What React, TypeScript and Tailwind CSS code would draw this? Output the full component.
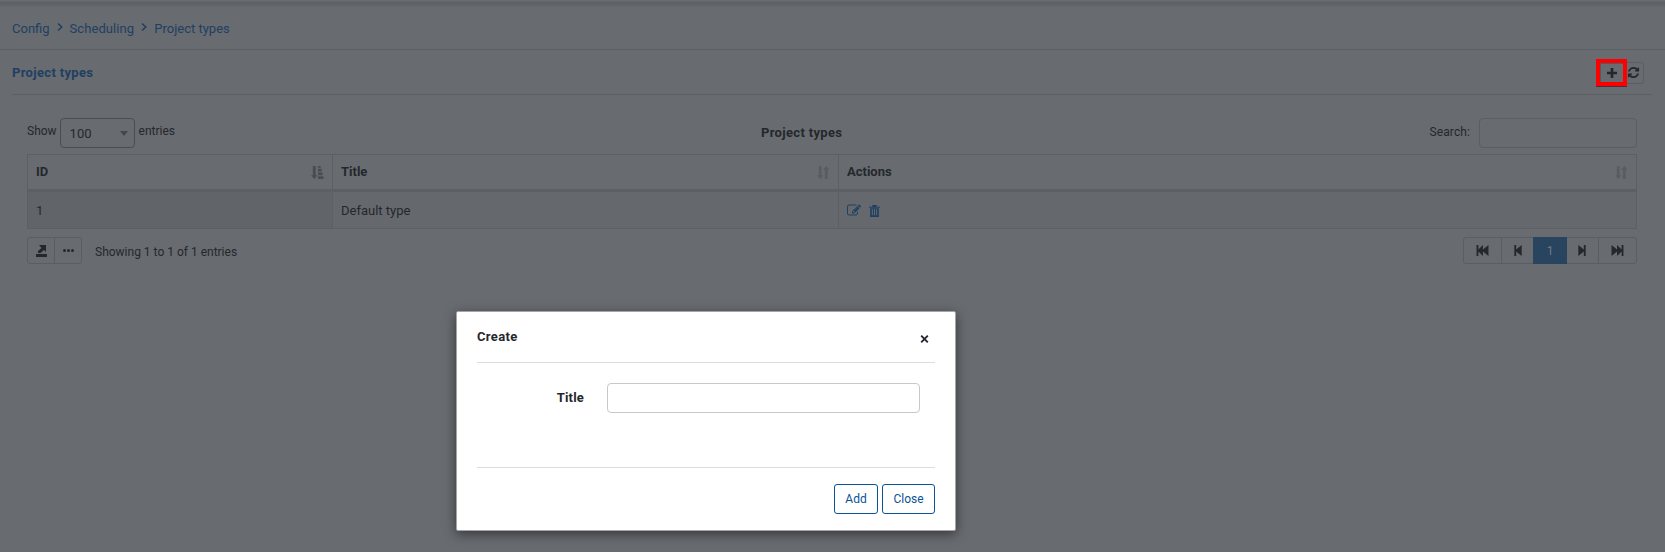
import React from "react";

const INK = "#24282d";

function Icon({ d, box, className }: { d: string; box: string; className: string }) {
  return (
    <svg viewBox={box} className={className} fill="currentColor">
      <path d={d} />
    </svg>
  );
}

const EDIT =
  "M888 1184l116-116-152-152-116 116v56h96v96h56zm440-720q-16-16-33 1l-350 350q-17 17-1 33t33-1l350-350q17-17 1-33zm80 594v190q0 119-84.5 203.5t-203.5 84.5h-832q-119 0-203.5-84.5t-84.5-203.5v-832q0-119 84.5-203.5t203.5-84.5h832q63 0 117 25 15 7 18 23 3 17-9 29l-49 49q-14 14-32 8-23-6-45-6h-832q-66 0-113 47t-47 113v832q0 66 47 113t113 47h832q66 0 113-47t47-113v-126q0-13 9-22l64-64q15-15 35-7t20 29zm-96-738l288 288-672 672h-288v-288zm444 132l-92 92-288-288 92-92q28-28 68-28t68 28l152 152q28 28 28 68t-28 68z";
const REFRESH =
  "M1639 1056q0 5-1 7-64 268-268 434.5t-478 166.5q-146 0-282.5-55t-243.5-157l-129 129q-19 19-45 19t-45-19-19-45v-448q0-26 19-45t45-19h448q26 0 45 19t19 45-19 45l-137 137q71 66 161 102t187 36q134 0 250-65t186-179q11-17 53-117 8-23 30-23h192q13 0 22.5 9.5t9.5 22.5zm25-800v448q0 26-19 45t-45 19h-448q-26 0-45-19t-19-45 19-45l138-138q-148-137-349-137-134 0-250 65t-186 179q-11 17-53 117-8 23-30 23h-199q-13 0-22.5-9.5t-9.5-22.5v-7q65-268 270-434.5t480-166.5q146 0 284 55.5t245 156.5l130-129q19-19 45-19t45 19 19 45z";
const SORT_BOTH = "M2 0h3v10h2l-3.500 4l-3.500-4h2zM8.500 14v-10h-2l3.500-4l3.500 4h-2v10z";
const SORT_ASC = "M2 0h3v10h2l-3.500 4l-3.500-4h2zM7.500 0h3v2h-3zM7.500 3h4v3h-4zM7.500 7h5v3h-5zM7.500 11h6v3h-6z";
const FIRST = "M0 0h2v5l5-5v5l6-5v12l-6-5v5l-5-5v5h-2z";
const PREV = "M0 0h2v5l6-5v12l-6-5v5h-2z";
const NEXT = "M8 0h-2v5l-6-5v12l6-5v5h2z";
const LAST = "M13 0h-2v5l-5-5v5l-6-5v12l6-5v5l5-5v5h2z";

function Chevron() {
  return (
    <svg viewBox="0 0 6 8" className="mx-[7px] mt-[-3px] h-2 w-[6px]" fill="none" stroke="#1f4061" strokeWidth="1.5">
      <path d="M1 .5L4.800 4L1 7.500" />
    </svg>
  );
}

function HeadCell({ title, sorted = false }: { title: string; sorted?: boolean }) {
  return (
    <div className="flex items-center justify-between border-r border-[#5c5f64] pr-2 pl-2 font-bold">
      <span>{title}</span>
      <Icon
        d={sorted ? SORT_ASC : SORT_BOTH}
        box="0 0 14 14"
        className={sorted ? "h-[13px] w-[13px] text-[#494c51]" : "h-[13px] w-[13px] text-[#595c61]"}
      />
    </div>
  );
}

export default function App() {
  return (
    <div
      className="relative h-[552px] w-[1665px] overflow-hidden bg-[#686b70] text-[13px] leading-5"
      style={{ fontFamily: 'Roboto, "Liberation Sans", sans-serif', color: INK }}
    >
      <div className="h-2 bg-linear-to-b from-[#686b70] from-10% via-[#5c5f63] via-35% to-[#686b70]" />
      <nav className="flex h-[42px] items-center border-b border-[#5c5f64] pl-3 text-[#1f4061]">
        <span>Config</span>
        <Chevron />
        <span className="tracking-[0.08px]">Scheduling</span>
        <Chevron />
        <span>Project types</span>
      </nav>
      <header className="mr-[13px] ml-3 flex h-[45px] items-center justify-between border-b border-[#5c5f64] pr-2">
        <h1 className="pt-[2px] font-bold tracking-[0.33px] text-[#1f4061]">Project types</h1>
        <div className="flex items-center pt-[1px]">
          <button className="z-1 mr-[-5px] flex h-[27px] w-[31px] items-center justify-center border-4 border-[#ff0000] bg-[#686b70] shadow-[0_1px_0_#4a3036,inset_1px_1px_0_#55585d]">
            <Icon d="M3.700 0h2.600v3.700h3.700v2.600h-3.700v3.700h-2.600v-3.700h-3.700v-2.600h3.700z" box="0 0 10 10" className="h-[10px] w-[10px]" />
          </button>
          <button className="flex h-[22px] w-[22px] items-center justify-center rounded-[3px] border border-[#5a5d62] pl-[1px]">
            <Icon d={REFRESH} box="0 0 1792 1792" className="h-[13px] w-[13px] shrink-0" />
          </button>
        </div>
      </header>

      <main className="mr-7 ml-[27px]">
        <div className="flex h-[59px] items-start pt-[23px] text-xs">
          <div className="flex w-[734px]">
            <span className="mt-[5px]">Show</span>
            <div className="ml-[3px] flex h-[30px] w-[75px] items-center justify-between rounded border border-[#4a4d52] pr-[6px] pl-[9px] text-[13px]">
              <span className="pt-[2px]">100</span>
              <svg viewBox="0 0 8 5" className="h-[5px] w-2" fill="#44474c"><path d="M0 0h8l-4 5z" /></svg>
            </div>
            <span className="mt-[5px] ml-1">entries</span>
          </div>
          <span className="mt-[6px] text-[13px] font-bold tracking-[0.33px]">Project types</span>
          <div className="flex flex-1 justify-end">
            <span className="mt-[6px] mr-[9px] tracking-[0.1px]">Search:</span>
            <div className="h-[30px] w-[158px] rounded border border-[#5a5d62]" />
          </div>
        </div>

        <div className="border border-r-0 border-[#5c5f64]">
          <div className="grid h-[37px] grid-cols-[305px_506px_1fr] border-b-3 border-[#5c5f64]">
            <HeadCell title="ID" sorted />
            <HeadCell title="Title" />
            <HeadCell title="Actions" />
          </div>
          <div className="grid h-[36px] grid-cols-[305px_506px_1fr] bg-[#65686d]">
            <div className="flex items-center border-r border-[#5c5f64] bg-[#616469] pt-[1px] pl-2">1</div>
            <div className="flex items-center border-r border-[#5c5f64] pt-[1px] pl-2">Default type</div>
            <div className="flex items-center gap-2 border-r border-[#5c5f64] pl-2 text-[#1f4061]">
              <Icon d={EDIT} box="0 0 1792 1792" className="h-[15px] w-[14px]" />
              <Icon
                d="M3 0h4v1.500h3v1h-10v-1h3zM1 3h8v8h-8zM2.500 4v5.500h1v-5.500zM4.500 4v5.500h1v-5.500zM6.500 4v5.500h1v-5.500z"
                box="0 0 10 11"
                className="mt-[1px] h-3 w-[11px]"
              />
            </div>
          </div>
        </div>

        <div className="mt-2 flex items-start justify-between">
          <div className="flex text-xs">
            <div className="flex h-[27px] w-[55px] rounded-[3px] border border-[#5a5d62]">
              <div className="flex w-[27px] items-center justify-center border-r border-[#5a5d62]">
                <Icon
                  d="M0 9h11v3h-11zM3 0h7v7l-2-2l-3.500 3h-2.500v-2l3.500-3z"
                  box="0 0 11 12"
                  className="h-3 w-[11px]"
                />
              </div>
              <div className="flex flex-1 items-center justify-center">
                <svg viewBox="0 0 11 3" className="h-[3px] w-[11px]" fill="currentColor">
                  <circle cx="1.500" cy="1.500" r="1.500" />
                  <circle cx="5.500" cy="1.500" r="1.500" />
                  <circle cx="9.500" cy="1.500" r="1.500" />
                </svg>
              </div>
            </div>
            <span className="mt-[7px] ml-[13px]">Showing 1 to 1 of 1 entries</span>
          </div>
          <div className="flex h-[27px] w-[174px] rounded-[3px] border border-[#5a5d62]">
            <div className="flex w-[38px] items-center justify-center border-r border-[#5a5d62]">
              <Icon d={FIRST} box="0 0 13 12" className="h-[11px] w-[13px]" />
            </div>
            <div className="flex w-[31px] items-center justify-center">
              <Icon d={PREV} box="0 0 8 12" className="h-[11px] w-2" />
            </div>
            <div className="my-[-1px] flex w-[34px] items-center justify-center bg-[#28445e] text-xs text-[#777a7f]">1</div>
            <div className="flex w-[32px] items-center justify-center border-r border-[#5a5d62] pr-[2px]">
              <Icon d={NEXT} box="0 0 8 12" className="h-[11px] w-2" />
            </div>
            <div className="flex flex-1 items-center justify-center">
              <Icon d={LAST} box="0 0 13 12" className="h-[11px] w-[13px]" />
            </div>
          </div>
        </div>
      </main>

      <section className="absolute top-[311px] left-[456px] flex h-[220px] w-[500px] flex-col rounded-[2px] border border-[#a3a5a8] bg-white px-5 text-[#24282d] shadow-[0_3px_12px_rgba(0,0,0,0.5)]">
        <div className="flex h-[51px] shrink-0 items-start justify-between border-b border-[#ddd] pr-[6px]">
          <h2 className="mt-[15px] font-bold tracking-[0.33px]">Create</h2>
          <svg viewBox="0 0 8 8" className="mt-[23px] h-2 w-[9px]" stroke="#24282d" strokeWidth="1.900">
            <path d="M.7.7L7.300 7.300M7.300.7L.7 7.300" />
          </svg>
        </div>
        <div className="flex h-[105px] shrink-0 items-start border-b border-[#ddd] pt-5">
          <span className="mt-[5px] w-[107px] text-right font-bold tracking-[0.2px]">Title</span>
          <input className="ml-[23px] h-[30px] w-[313px] rounded border border-[#c8c8c8]" />
        </div>
        <div className="flex justify-end gap-1 pt-4 text-xs text-[#0b5394]">
          <button className="h-[30px] w-[44px] rounded-[3px] border border-[#0b5394]">Add</button>
          <button className="h-[30px] w-[53px] rounded-[3px] border border-[#0b5394]">Close</button>
        </div>
      </section>
    </div>
  );
}
